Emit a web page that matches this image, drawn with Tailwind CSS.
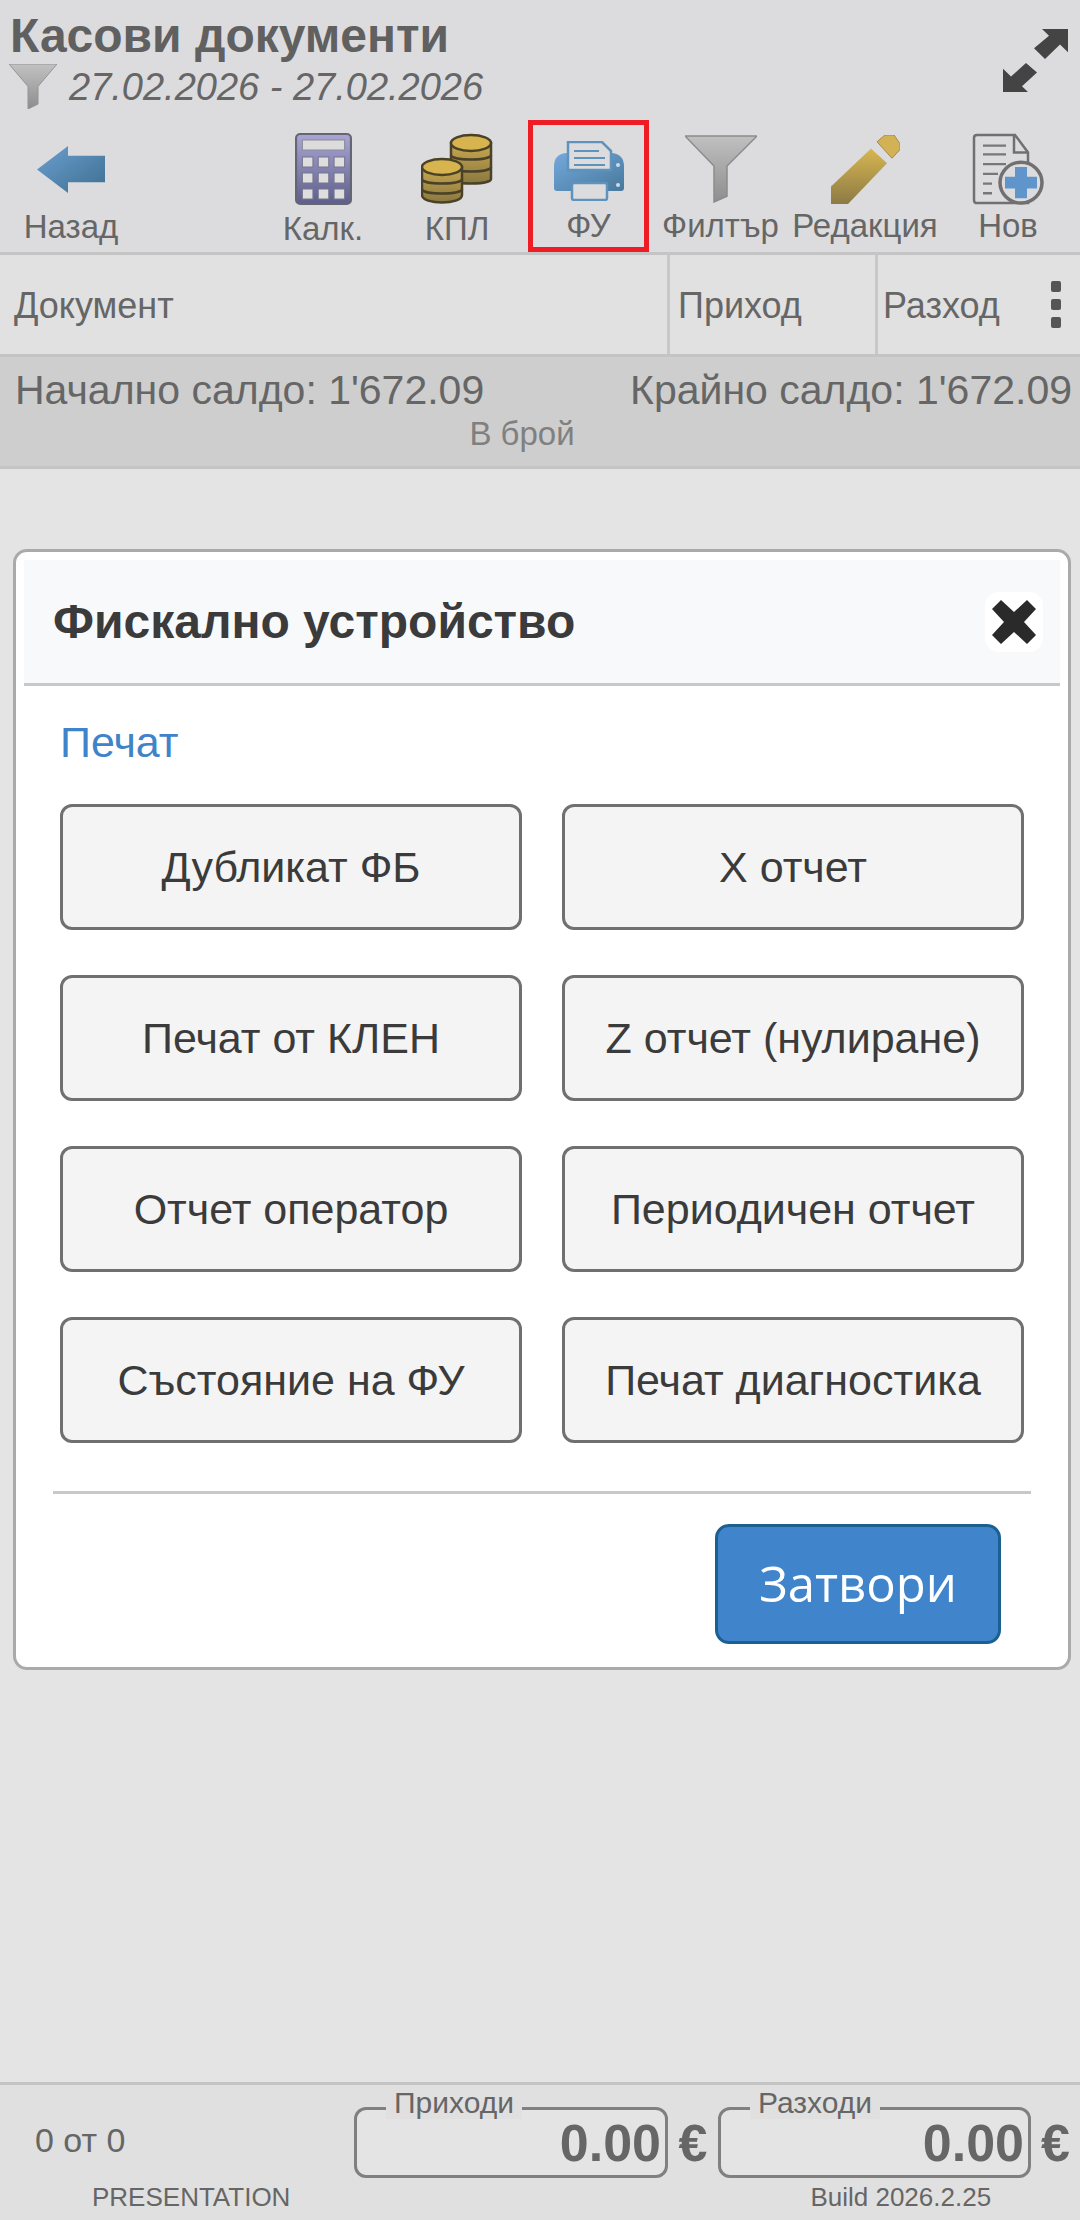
<!DOCTYPE html>
<html lang="bg">
<head>
    <meta charset="UTF-8">
    <title>Касови документи</title>
    <script src="https://cdn.jsdelivr.net/npm/@tailwindcss/browser@4"></script>
</head>
<body class="bg-[#e4e4e4] font-['Liberation_Sans',sans-serif] text-[#666666]">
<div class="w-[1080px] h-[2220px] flex flex-col overflow-hidden">

    <!-- Header -->
    <header class="bg-[#dcdcde] h-[255px] border-b-[3px] border-[#c4c4c4] shrink-0 flex flex-col">
        <div class="h-[123px] flex justify-between">
            <div class="pl-[10px] pt-[12px]">
                <h1 class="text-[48px] leading-[48px] font-bold text-[#606060]">Касови документи</h1>
                <div class="flex items-start mt-[4px]">
                    <svg class="w-[48px] h-[45px] ml-[-1px]" viewBox="0 0 48 46" preserveAspectRatio="none">
                        <defs><linearGradient id="fs" x1="0" y1="0" x2="0" y2="1"><stop offset="0" stop-color="#c2c2c2"/><stop offset="1" stop-color="#8c8c8c"/></linearGradient></defs>
                        <path d="M0 0H48L29 23V41L19 46V23Z" fill="url(#fs)" stroke="#949494" stroke-width="1"/>
                    </svg>
                    <span class="ml-[12px] mt-[2px] text-[38px] leading-[42px] italic text-[#666666]">27.02.2026 - 27.02.2026</span>
                </div>
            </div>
            <svg class="w-[65px] h-[64px] mt-[28px] mr-[12px]" viewBox="0 0 65 66" preserveAspectRatio="none" fill="#444444">
                <path d="M65 1V25L57 17L42 32L31 21L46 8L39 1Z"/>
                <path d="M0 66V42L8 50L23 36L34 46L19 60L25 66Z"/>
            </svg>
        </div>

        <!-- Toolbar -->
        <nav class="flex-1 flex text-[33px] leading-[36px] text-[#666666]">
            <div class="w-[142px] flex flex-col items-center">
                <svg class="w-[68px] h-[47px] mt-[26px]" viewBox="0 0 68 48" preserveAspectRatio="none">
                    <defs><linearGradient id="ar" x1="0" y1="0" x2="1" y2="1"><stop offset="0" stop-color="#6a9fd0"/><stop offset="1" stop-color="#3f6f90"/></linearGradient></defs>
                    <path d="M0 24L31 0V10H68V37H31V48Z" fill="url(#ar)"/>
                </svg>
                <span class="mt-[16px]">Назад</span>
            </div>
            <div class="w-[118px]"></div>
            <div class="w-[126px] flex flex-col items-center">
                <svg class="w-[57px] h-[72px] mt-[13px]" viewBox="0 0 54 72" preserveAspectRatio="none">
                    <defs><linearGradient id="ca" x1="0" y1="0" x2="0" y2="1"><stop offset="0" stop-color="#a9a6d6"/><stop offset="1" stop-color="#5e5e8c"/></linearGradient></defs>
                    <rect x="1" y="1" width="52" height="70" rx="4" fill="url(#ca)" stroke="#666670" stroke-width="2"/>
                    <rect x="7" y="7" width="40" height="10" fill="#dcdcdc" stroke="#8d8d96"/>
                    <g fill="#dedede" stroke="#77778c">
                        <rect x="7" y="24" width="10" height="10"/><rect x="22" y="24" width="10" height="10"/><rect x="37" y="24" width="10" height="10"/>
                        <rect x="7" y="40" width="10" height="10"/><rect x="22" y="40" width="10" height="10"/><rect x="37" y="40" width="10" height="10"/>
                        <rect x="7" y="56" width="10" height="10"/><rect x="22" y="56" width="10" height="10"/><rect x="37" y="56" width="10" height="10"/>
                    </g>
                </svg>
                <span class="mt-[6px]">Калк.</span>
            </div>
            <div class="w-[142px] flex flex-col items-center">
                <svg class="w-[72px] h-[72px] mt-[13px]" viewBox="0 0 72 72" stroke="#4a4228" stroke-width="2.5">
                    <defs>
                        <linearGradient id="co" x1="0" y1="0" x2="0" y2="1"><stop offset="0" stop-color="#c9a94f"/><stop offset="1" stop-color="#8a7840"/></linearGradient>
                    </defs>
                    <path d="M30 10V46C30 52 70 52 70 46V10Z" fill="url(#co)"/>
                    <path d="M30 22C30 28 70 28 70 22M30 34C30 40 70 40 70 34" fill="none"/>
                    <ellipse cx="50" cy="10" rx="20" ry="8" fill="#d8b44f"/>
                    <path d="M1 34V62C1 72 41 72 41 62V34Z" fill="url(#co)"/>
                    <path d="M1 46C1 52 41 52 41 46M1 56C1 62 41 62 41 56" fill="none"/>
                    <ellipse cx="21" cy="34" rx="20" ry="8" fill="#d8b44f"/>
                </svg>
                <span class="mt-[6px]">КПЛ</span>
            </div>
            <div class="w-[121px] h-[132px] border-[5px] border-[#ee1c25] flex flex-col items-center">
                <svg class="w-[72px] h-[60px] mt-[16px]" viewBox="0 0 72 60">
                    <defs><linearGradient id="pr" x1="0" y1="0" x2="1" y2="1"><stop offset="0" stop-color="#74a9dc"/><stop offset="1" stop-color="#47789c"/></linearGradient></defs>
                    <path d="M14 12H58C66 12 71 17 71 25V47C71 49 70 50 68 50H4C2 50 1 49 1 47V25C1 17 6 12 14 12Z" fill="url(#pr)"/>
                    <path d="M15 1H49L58 10V29H15Z" fill="#dcdcde" stroke="#5d93bd" stroke-width="2.5"/>
                    <path d="M21 10H46M21 17H52M21 24H52" stroke="#5d93bd" stroke-width="2"/>
                    <rect x="19" y="42" width="35" height="17" rx="2" fill="#dcdcde" stroke="#5d93bd" stroke-width="2.5"/>
                    <circle cx="65" cy="24" r="2" fill="#cfdbe6"/><circle cx="65" cy="44" r="2" fill="#cfdbe6"/>
                </svg>
                <span class="mt-[7px]">ФУ</span>
            </div>
            <div class="w-[143px] flex flex-col items-center">
                <svg class="w-[72px] h-[68px] mt-[15px]" viewBox="0 0 72 70" preserveAspectRatio="none">
                    <defs><linearGradient id="fl" x1="0" y1="0" x2="0" y2="1"><stop offset="0" stop-color="#c0c0c0"/><stop offset="1" stop-color="#8e8e8e"/></linearGradient></defs>
                    <path d="M0 1H72L42 32V63L29 69V32Z" fill="url(#fl)" stroke="#8c8c8c" stroke-width="1.5"/>
                </svg>
                <span class="mt-[5px]">Филтър</span>
            </div>
            <div class="w-[146px] flex flex-col items-center">
                <svg class="w-[69px] h-[69px] mt-[15px]" viewBox="0 0 69 71" preserveAspectRatio="none">
                    <defs><linearGradient id="pe" x1="0" y1="0" x2="0" y2="1"><stop offset="0" stop-color="#d8b650"/><stop offset="1" stop-color="#8c7a45"/></linearGradient></defs>
                    <path d="M0 53L40 14L56 29L17 71H0Z" fill="url(#pe)"/>
                    <path d="M46 7L54 0H63L69 9V15L61 24Z" fill="#d3b255" stroke="#a08a4c"/>
                </svg>
                <span class="mt-[4px]">Редакция</span>
            </div>
            <div class="w-[140px] flex flex-col items-center">
                <svg class="w-[72px] h-[72px] mt-[13px]" viewBox="0 0 72 74" preserveAspectRatio="none">
                    <path d="M5 2H43L56 20V72H5C3 72 2 71 2 69V5C2 3 3 2 5 2Z" fill="none" stroke="#707070" stroke-width="2.5"/>
                    <path d="M42 2V20H56" fill="none" stroke="#707070" stroke-width="2.5"/>
                    <path d="M11 13H34M11 22H34M11 32H34M11 42H26M11 52H20M11 62H20" stroke="#777777" stroke-width="2.5"/>
                    <circle cx="49" cy="51" r="21" fill="#dcdcde" stroke="#707070" stroke-width="3.5"/>
                    <path d="M43 35H55V45H65V57H55V67H43V57H33V45H43Z" fill="#5f95cb"/>
                </svg>
                <span class="mt-[3px]">Нов</span>
            </div>
        </nav>
    </header>

    <!-- Table head -->
    <div class="h-[102px] shrink-0 flex bg-[#e1e1e1] border-b-[3px] border-[#c4c4c4] text-[36px] items-stretch">
        <div class="w-[667px] flex items-center pl-[14px] pt-[2px]">Документ</div>
        <div class="w-[208px] flex items-center pl-[8px] pt-[2px] border-l-[3px] border-[#c8c8c8]">Приход</div>
        <div class="flex-1 flex items-center justify-between pl-[5px] pr-[19px] border-l-[3px] border-[#c8c8c8]">
            <span class="pt-[2px]">Разход</span>
            <div class="flex flex-col gap-[7px]">
                <span class="w-[10px] h-[11px] rounded-[2px] bg-[#555555]"></span>
                <span class="w-[10px] h-[11px] rounded-[2px] bg-[#555555]"></span>
                <span class="w-[10px] h-[11px] rounded-[2px] bg-[#555555]"></span>
            </div>
        </div>
    </div>

    <!-- Balance -->
    <div class="h-[112px] shrink-0 bg-[#cecece] border-b-[3px] border-[#c4c4c4] pl-[15px] pr-[8px] pt-[12px]">
        <div class="flex justify-between text-[41px] leading-[42px] text-[#666666]">
            <span>Начално салдо: 1'672.09</span>
            <span>Крайно салдо: 1'672.09</span>
        </div>
        <div class="text-center text-[33px] leading-[36px] mt-[5px] pr-[43px] text-[#808080]">В брой</div>
    </div>

    <!-- Dialog -->
    <main class="flex-1 pl-[13px] pt-[80px] pr-[9px]">
        <section class="h-[1121px] bg-white border-[3px] border-[#aaaaaa] rounded-[14px] p-[8px]">
            <div class="h-[126px] bg-[#f8f9fb] border-b-[3px] border-[#c8c8c8] flex items-center justify-between pl-[29px] pr-[17px]">
                <h2 class="text-[48px] font-bold text-[#3b3b3b]">Фискално устройство</h2>
                <div class="w-[58px] h-[60px] rounded-[14px] bg-white flex items-center justify-center">
                    <svg class="w-[46px] h-[46px]" viewBox="0 0 46 46"><path d="M10 1L23 13L36 1L45 10L33 23L45 36L36 45L23 33L10 45L1 36L13 23L1 10Z" fill="#2a2a2a"/></svg>
                </div>
            </div>
            <div class="pl-[36px]">
                <h3 class="text-[43px] leading-[44px] mt-[34px] text-[#3f83ca]">Печат</h3>
                <div class="grid grid-cols-2 gap-x-[40px] gap-y-[45px] mt-[40px] w-[964px] text-[43px] text-[#3b3b3b]">
                    <button class="h-[126px] bg-[#f4f4f4] border-[3px] border-[#707070] rounded-[12px]">Дубликат ФБ</button>
                    <button class="h-[126px] bg-[#f4f4f4] border-[3px] border-[#707070] rounded-[12px]">X отчет</button>
                    <button class="h-[126px] bg-[#f4f4f4] border-[3px] border-[#707070] rounded-[12px]">Печат от КЛЕН</button>
                    <button class="h-[126px] bg-[#f4f4f4] border-[3px] border-[#707070] rounded-[12px]">Z отчет (нулиране)</button>
                    <button class="h-[126px] bg-[#f4f4f4] border-[3px] border-[#707070] rounded-[12px]">Отчет оператор</button>
                    <button class="h-[126px] bg-[#f4f4f4] border-[3px] border-[#707070] rounded-[12px]">Периодичен отчет</button>
                    <button class="h-[126px] bg-[#f4f4f4] border-[3px] border-[#707070] rounded-[12px]">Състояние на ФУ</button>
                    <button class="h-[126px] bg-[#f4f4f4] border-[3px] border-[#707070] rounded-[12px]">Печат диагностика</button>
                </div>
            </div>
            <div class="mx-[29px] mt-[48px] border-t-[3px] border-[#c8c8c8] flex justify-end pr-[30px] pt-[30px]">
                <button class="w-[286px] h-[120px] bg-[#4085cc] border-[3px] border-[#1c6091] rounded-[14px] text-white text-[49px] font-['Open_Sans',sans-serif]">Затвори</button>
            </div>
        </section>
    </main>

    <!-- Footer -->
    <footer class="h-[138px] shrink-0 bg-[#e0e0e0] border-t-[3px] border-[#c4c4c4] flex flex-col">
        <div class="flex h-[97px]">
            <div class="w-[354px] pl-[35px] pt-[37px] text-[34px] leading-[36px]">0 от 0</div>
            <div class="relative w-[314px] h-[71px] mt-[22px] border-[3px] border-[#808080] rounded-[12px] bg-[#e4e4e4] flex items-center justify-end pr-[4px] text-[52px] font-bold leading-none">
                0.00
                <span class="absolute left-[29px] top-[-23px] px-[8px] bg-[#e0e0e0] text-[30px] leading-[32px] font-normal text-[#666666]">Приходи</span>
            </div>
            <div class="w-[50px] text-center text-[52px] font-bold leading-none mt-[32px]">€</div>
            <div class="relative w-[313px] h-[71px] mt-[22px] border-[3px] border-[#808080] rounded-[12px] bg-[#e4e4e4] flex items-center justify-end pr-[4px] text-[52px] font-bold leading-none">
                0.00
                <span class="absolute left-[29px] top-[-23px] px-[8px] bg-[#e0e0e0] text-[30px] leading-[32px] font-normal text-[#666666]">Разходи</span>
            </div>
            <div class="w-[49px] text-center text-[52px] font-bold leading-none mt-[32px]">€</div>
        </div>
        <div class="flex text-[26px] leading-[30px]">
            <span class="ml-[92px]">PRESENTATION</span>
            <span class="ml-[520px]">Build 2026.2.25</span>
        </div>
    </footer>
</div>
</body>
</html>
